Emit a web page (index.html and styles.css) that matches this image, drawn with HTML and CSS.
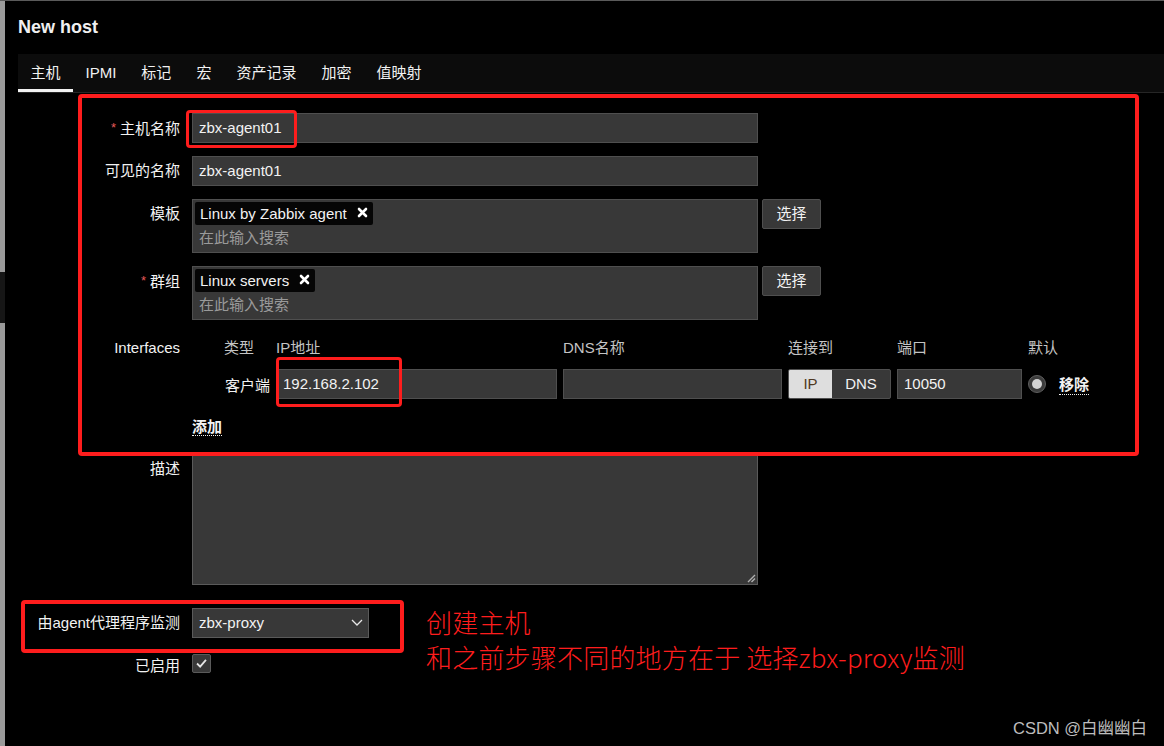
FILE: index.html
```html
<!DOCTYPE html>
<html lang="zh-CN">
<head>
<meta charset="utf-8">
<title>New host</title>
<link rel="stylesheet" href="styles.css">
</head>
<body>
<div class="screen">
  <div class="strip"><div class="strip-dark"></div></div>
  <main class="page">
    <h1 class="title">New host</h1>
    <nav class="tabs">
      <span class="tab active">主机</span>
      <span class="tab">IPMI</span>
      <span class="tab">标记</span>
      <span class="tab">宏</span>
      <span class="tab">资产记录</span>
      <span class="tab">加密</span>
      <span class="tab">值映射</span>
    </nav>

    <div class="form">
      <div class="lbl"><span class="req">*</span>主机名称</div>
      <div class="field"><div class="input wide">zbx-agent01</div></div>

      <div class="lbl">可见的名称</div>
      <div class="field"><div class="input wide">zbx-agent01</div></div>

      <div class="lbl">模板</div>
      <div class="field row">
        <div class="multi">
          <div class="chips">
            <span class="chip">Linux by Zabbix agent<svg class="chip-x" viewBox="0 0 11 11" width="11" height="11"><path d="M2 2 L9 9 M9 2 L2 9" stroke="#fff" stroke-width="2.6" stroke-linecap="round"/></svg></span>
          </div>
          <div class="placeholder">在此输入搜索</div>
        </div>
        <div class="btn">选择</div>
      </div>

      <div class="lbl"><span class="req">*</span>群组</div>
      <div class="field row">
        <div class="multi">
          <div class="chips">
            <span class="chip">Linux servers<svg class="chip-x" viewBox="0 0 11 11" width="11" height="11"><path d="M2 2 L9 9 M9 2 L2 9" stroke="#fff" stroke-width="2.6" stroke-linecap="round"/></svg></span>
          </div>
          <div class="placeholder">在此输入搜索</div>
        </div>
        <div class="btn">选择</div>
      </div>

      <div class="lbl">Interfaces</div>
      <div class="field">
        <div class="ifaces">
          <span></span>
          <span class="ih">类型</span>
          <span class="ih">IP地址</span>
          <span class="ih">DNS名称</span>
          <span class="ih">连接到</span>
          <span class="ih">端口</span>
          <span class="ih">默认</span>
          <span></span>

          <span></span>
          <span class="itype">客户端</span>
          <div class="input">192.168.2.102</div>
          <div class="input"></div>
          <div class="toggle"><span class="tg on">IP</span><span class="tg">DNS</span></div>
          <div class="input">10050</div>
          <span class="radio"></span>
          <span class="link remove">移除</span>
        </div>
        <div class="add"><span class="link">添加</span></div>
      </div>

      <div class="lbl">描述</div>
      <div class="field">
        <div class="textarea"><svg class="grip" viewBox="0 0 10 10" width="10" height="10"><path d="M9 2 L2 9 M9 5.5 L5.5 9" stroke="#b0b0b0" stroke-width="1.4"/></svg></div>
      </div>

      <div class="lbl spaced">由agent代理程序监测</div>
      <div class="field spaced">
        <div class="select">zbx-proxy<svg class="chev" viewBox="0 0 12 7" width="12" height="7"><path d="M1 1 L6 6 L11 1" fill="none" stroke="#e8e8e8" stroke-width="1.3"/></svg></div>
      </div>

      <div class="lbl">已启用</div>
      <div class="field">
        <div class="check"><svg viewBox="0 0 19 19" width="17" height="17"><path d="M4.5 9.5 L8 13 L14.5 5.5" fill="none" stroke="#e6e6e6" stroke-width="2"/></svg></div>
      </div>
    </div>
  </main>

  <div class="mark mark-main"></div>
  <div class="mark mark-name"></div>
  <div class="mark mark-ip"></div>
  <div class="mark mark-proxy"></div>

  <div class="note">
    <div>创建主机</div>
    <div>和之前步骤不同的地方在于 选择zbx-proxy监测</div>
  </div>
  <div class="watermark">CSDN @白幽幽白</div>
</div>
</body>
</html>
```

FILE: styles.css
```css
* { box-sizing: border-box; }

html, body {
  margin: 0;
  padding: 0;
  background: #000;
}

body {
  font-family: "Liberation Sans", Arial, "Noto Sans CJK SC", sans-serif;
  font-size: 15px;
  color: #f2f2f2;
}

.screen {
  position: relative;
  width: 1164px;
  height: 746px;
  overflow: hidden;
  display: flex;
  border-top: 1px solid #5a5a5a;
  background: #000;
}

.strip {
  width: 5px;
  flex: none;
  background: #9a9a9a;
  padding-top: 271px;
}

.strip-dark {
  height: 51px;
  background: #161616;
}

.page {
  flex: 1;
  padding: 15px 0 0 13px;
}

.title {
  margin: 0;
  font-size: 18px;
  line-height: 22px;
  font-weight: bold;
  color: #f0f0f0;
}

.tabs {
  margin-top: 16px;
  height: 39px;
  display: flex;
  background: #0c0c0c;
  border-bottom: 1px solid #262626;
}

.tab {
  padding: 0 12.5px;
  line-height: 38px;
  height: 38px;
  color: #f2f2f2;
}

.tab.active {
  box-shadow: inset 0 -3px 0 #f2f2f2;
}

.form {
  padding-top: 20px;
  display: grid;
  grid-template-columns: 162px 1fr;
  column-gap: 12px;
  row-gap: 13px;
}

.lbl {
  text-align: right;
  line-height: 29px;
  white-space: nowrap;
}

.req {
  color: #e45959;
  font-size: 13px;
  margin-right: 4px;
  vertical-align: 2px;
}

.field.row {
  display: flex;
  align-items: flex-start;
}

.spaced { margin-top: 10px; }

.input {
  height: 30px;
  line-height: 28px;
  background: #383838;
  border: 1px solid #4f4f4f;
  padding: 0 6px;
  color: #f2f2f2;
  white-space: nowrap;
}

.input.wide { width: 566px; }

.multi {
  width: 566px;
  height: 54px;
  background: #383838;
  border: 1px solid #4f4f4f;
  padding: 2px;
}

.chips { height: 23px; display: flex; }

.chip {
  display: inline-flex;
  align-items: center;
  height: 23px;
  padding: 0 5px;
  background: #050505;
  border-radius: 2px;
  color: #f2f2f2;
  white-space: nowrap;
}

.chip-x { margin-left: 10px; margin-top: -3px; }

.placeholder {
  line-height: 26px;
  padding-left: 4px;
  color: #9a9a9a;
}

.btn {
  margin-left: 4px;
  width: 59px;
  height: 30px;
  line-height: 28px;
  text-align: center;
  background: #383838;
  border: 1px solid #4f4f4f;
  border-radius: 2px;
  color: #f2f2f2;
}

.ifaces {
  display: grid;
  grid-template-columns: 26px 46px 281px 219px 103px 125px 18px auto;
  column-gap: 6px;
  row-gap: 7px;
  align-items: center;
}

.ih {
  line-height: 29px;
  color: #c4c4c4;
  white-space: nowrap;
}

.itype {
  text-align: right;
  white-space: nowrap;
}

.toggle {
  display: flex;
  height: 30px;
  border: 1px solid #4f4f4f;
  border-radius: 2px;
  overflow: hidden;
  background: #383838;
}

.tg {
  line-height: 28px;
  text-align: center;
  flex: 1;
}

.tg.on {
  flex: none;
  width: 43px;
  background: #dedede;
  color: #4e3822;
}

.radio {
  width: 18px;
  height: 18px;
  border-radius: 50%;
  background: #3c3c3c;
  border: 1px solid #5e5e5e;
  display: flex;
  align-items: center;
  justify-content: center;
}

.radio::after {
  content: "";
  width: 10px;
  height: 10px;
  border-radius: 50%;
  background: #d4d4d4;
}

.link {
  font-weight: bold;
  color: #f2f2f2;
  border-bottom: 1px dotted #f2f2f2;
  white-space: nowrap;
}

.remove { margin-left: 7px; justify-self: start; }

.add {
  margin-top: 14px;
  line-height: 28px;
}

.textarea {
  position: relative;
  width: 566px;
  height: 131px;
  background: #383838;
  border: 1px solid #5a5a5a;
}

.grip {
  position: absolute;
  right: 1px;
  bottom: 1px;
}

.select {
  position: relative;
  width: 177px;
  height: 30px;
  line-height: 28px;
  padding: 0 6px;
  background: #383838;
  border: 1px solid #5a5a5a;
}

.chev {
  position: absolute;
  right: 5px;
  top: 10px;
}

.check {
  margin-top: 3px;
  width: 19px;
  height: 19px;
  background: #383838;
  border: 1px solid #5a5a5a;
  border-radius: 2px;
  display: flex;
  align-items: center;
  justify-content: center;
}

/* annotation overlays */
.mark {
  position: absolute;
  border: 3px solid #fe1d1d;
  border-radius: 4px;
  pointer-events: none;
}

.mark-main  { left: 78px;  top: 93px;  width: 1061px; height: 362px; border-width: 4px; }
.mark-name  { left: 186px; top: 109px; width: 111px;  height: 38px; }
.mark-ip    { left: 276px; top: 356px; width: 126px;  height: 50px; }
.mark-proxy { left: 21px;  top: 599px; width: 383px;  height: 53px; border-width: 4px; }

.note {
  position: absolute;
  left: 426px;
  top: 603px;
  font-family: "Noto Sans CJK SC", "Liberation Sans", sans-serif;
  font-size: 26px;
  font-weight: 300;
  letter-spacing: 0.2px;
  line-height: 35px;
  color: #fe1d1d;
  white-space: nowrap;
}

.watermark {
  position: absolute;
  left: 1013px;
  top: 716px;
  font-family: "Liberation Sans", "Noto Sans CJK SC", sans-serif;
  font-size: 16.5px;
  line-height: 22px;
  color: #bdbdbd;
  white-space: nowrap;
}
```
